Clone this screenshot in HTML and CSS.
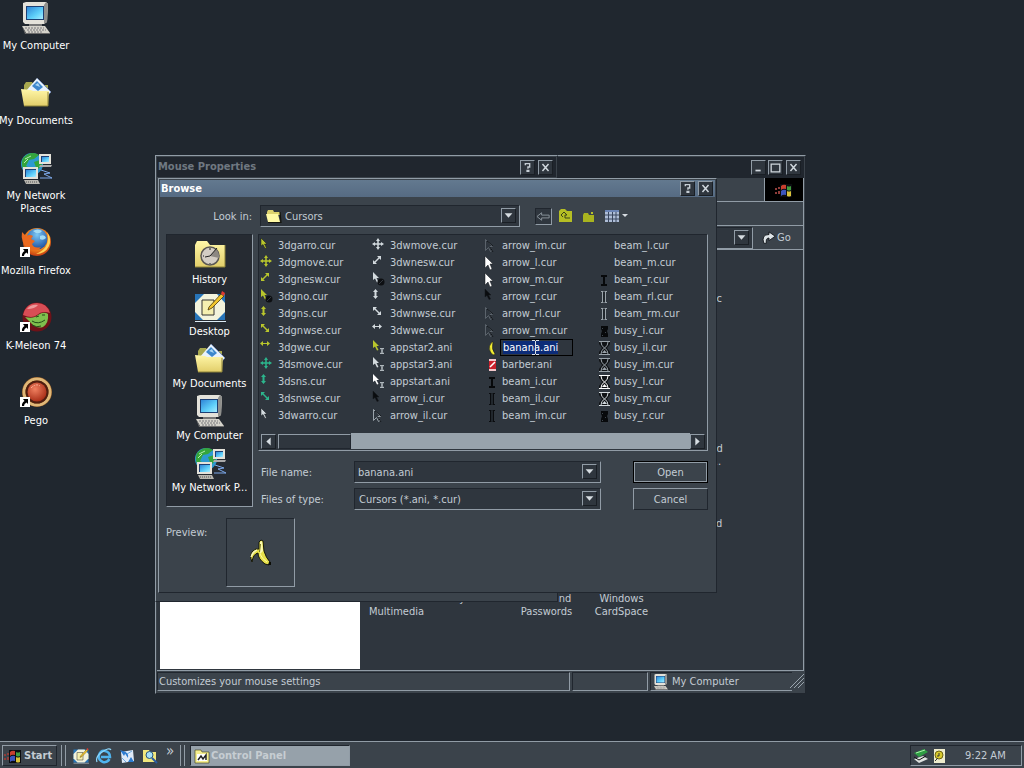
FILE: index.html
```
<!DOCTYPE html>
<html lang="en">
<head>
    <meta charset="UTF-8">
    <meta name="viewport" content="width=device-width, initial-scale=1.0">
    <title>Desktop</title>
    <link rel="stylesheet" href="styles.css">
</head>
<body>
    <!-- icon sprites -->
    <svg class="sprites" aria-hidden="true">
        <defs>
            <linearGradient id="screen" x1="0" y1="0" x2="1" y2="1"><stop offset="0" stop-color="#2f86d8"/><stop offset=".6" stop-color="#5fd0fa"/><stop offset="1" stop-color="#a8ecff"/></linearGradient>
            <linearGradient id="manila" x1="0" y1="0" x2="0" y2="1"><stop offset="0" stop-color="#fff7a8"/><stop offset="1" stop-color="#e2ce6a"/></linearGradient>
            <radialGradient id="fox" cx=".5" cy=".4" r=".6"><stop offset="0" stop-color="#ffd34a"/><stop offset=".6" stop-color="#f38a1d"/><stop offset="1" stop-color="#c33c12"/></radialGradient>
            <radialGradient id="blue" cx=".5" cy=".3" r=".7"><stop offset="0" stop-color="#7cc8f5"/><stop offset="1" stop-color="#1b4d9e"/></radialGradient>
            <radialGradient id="red" cx=".4" cy=".35" r=".7"><stop offset="0" stop-color="#f08060"/><stop offset="1" stop-color="#a52a14"/></radialGradient>
        </defs>
        <symbol id="computer" viewBox="0 0 32 32">
            <path d="M3 1l3-1h20l2 2-1 18-3 2H5l-2-2z" fill="#e4e2da"/>
            <path d="M26 0l2 2-1 18-3 2V3z" fill="#8f8f8c"/>
            <path d="M6 4h18v14H6z" fill="#1c3f74"/><path d="M7 5h16v12H7z" fill="url(#screen)"/>
            <path d="M9 22h13v2H9z" fill="#777"/>
            <path d="M2 24h23l5 7H6z" fill="#d5d3cb"/><path d="M5 26h19M7 28h19M8 30h15" stroke="#77767a" stroke-dasharray="2 1"/>
            <path d="M2 24l4 7h24v1H5z" fill="#6c6c6c"/>
        </symbol>
        <symbol id="documents" viewBox="0 0 32 32">
            <path d="M4 8l2-3h6l2 3h14v8H4z" fill="#a8a84e"/>
            <path d="M6 14L17 1l14 14-4 5H8z" fill="#e8f2fc"/><path d="M17 1l14 14-2 2" fill="none" stroke="#7b90b8"/>
            <path d="M12 9l5-5 6 6-5 4z" fill="#3d87cc"/><path d="M15 8l3-2 2 4z" fill="#a9d6f4"/>
            <path d="M1 12l10 1 2 1h16l-1 15H4z" fill="url(#manila)"/><path d="M28 15v14H4" fill="none" stroke="#8c8238"/>
        </symbol>
        <symbol id="network" viewBox="0 0 32 32">
            <circle cx="12" cy="12" r="11" fill="#2c9ad0"/>
            <path d="M3 6q8-8 16-3l-5 4-5 1-3 6 4 2-1 5q-10-4-6-15zM14 10l6-2 2 5-5 5z" fill="#35a53c"/>
            <path d="M5 7l6-3M4 11l4-4" stroke="#b5efb0"/>
            <path d="M19 2h12v10H19z" fill="#e4e2da"/><path d="M21 4h8v6h-8z" fill="#1c3f74"/><path d="M22 5h7v5h-7z" fill="url(#screen)"/><path d="M20 13h12l-1 2H19z" fill="#aaa"/>
            <path d="M3 15h15v12H3z" fill="#e4e2da"/><path d="M5 17h11v8H5z" fill="#1c3f74"/><path d="M6 18h10v7H6z" fill="url(#screen)"/><path d="M4 28h14l2 4H6z" fill="#b9b7b0"/><path d="M6 30h12" stroke="#555" stroke-dasharray="1 1"/>
            <path d="M21 18l9 3-6 1 8 4H20" fill="none" stroke="#7ca8ea"/>
        </symbol>
        <symbol id="shortcut" viewBox="0 0 10 10">
            <path d="M0 0h10v10H0z" fill="#fff"/><path d="M3 2h5v5L6.500 5.500Q4 6.500 4 9H2q-.5-3 2.500-5z" fill="#000"/>
        </symbol>
        <symbol id="firefox" viewBox="0 0 32 32">
            <circle cx="17" cy="15" r="14" fill="url(#fox)"/><circle cx="17" cy="12" r="10.500" fill="url(#blue)"/>
            <path d="M13 4q5-3 9 0-2 3-6 2zM20 9q5-2 6 2-3 3-6 1z" fill="#a4dcf5"/>
            <path d="M2 5l4 4q4-2 7 0l-2 3 4 2-3 3q2 5 9 3-4 6-12 2Q0 16 2 5z" fill="#ea6a20"/>
            <path d="M27 5q5 7 2 14-4 8-13 8 9-4 11-10 2-6 0-12z" fill="#ffd257"/>
        </symbol>
        <symbol id="kmeleon" viewBox="0 0 32 32">
            <circle cx="17" cy="15" r="14.500" fill="#6e1218"/><path d="M3 13Q6 1 17 1q10 0 13 10-8-3-13 2-5 4-14 0z" fill="#d84d55"/><path d="M7 7q4-5 11-4-3 4-11 4z" fill="#ee9a9c"/>
            <path d="M5 15q9 2 13-2 6-4 10-1 1 9-5 13-6 2-11-3z" fill="#7fbf4d"/><path d="M12 19q6 4 13-1M16 15l3-1M22 13l3 0M12 23q5 3 9 1" fill="none" stroke="#234d18"/>
        </symbol>
        <symbol id="pego" viewBox="0 0 32 32">
            <circle cx="17" cy="15" r="15" fill="#8a5726"/><circle cx="17" cy="15" r="13" fill="none" stroke="#e0b878" stroke-width="3"/><circle cx="17" cy="15" r="11.500" fill="#4f1e10"/><circle cx="17" cy="15" r="9.500" fill="url(#red)"/><path d="M11 11q5-5 9-2" fill="none" stroke="#ffb59a" stroke-dasharray="2 1"/>
        </symbol>
        <symbol id="history" viewBox="0 0 32 32">
            <path d="M1 6l2-4h10l3 4h15v22H1z" fill="url(#manila)"/><path d="M31 6v22H1" fill="none" stroke="#8c8238"/>
            <circle cx="16" cy="17" r="9" fill="#d3cdc4" stroke="#5b5854" stroke-width="1.500"/><path d="M16 17l6-7q4 4 3 9z" fill="#8c8882"/><path d="M16 17l7-8M16 17l-5 1M9 17h1M16 24v1M16 9v2" stroke="#222"/>
        </symbol>
        <symbol id="deskpad" viewBox="0 0 32 32">
            <path d="M1 3h30v26H1z" fill="#2774b8"/><path d="M10 3h13l8 9v9l-8 8H9l-8-8v-9z" fill="#f3f3dc"/><path d="M1 30.500h31" stroke="#dcebf5"/>
            <path d="M8 9h12v15H8z" fill="#f5efb0" stroke="#333"/><path d="M15 16L27 3l3 2-12 12-4 2z" fill="#f1c62c" stroke="#4d3708" stroke-width=".8"/><path d="M27 3l1-3 3 2-1 3z" fill="#e23a30"/>
        </symbol>
        <symbol id="folder" viewBox="0 0 16 16">
            <path d="M1 4l1-2h5l1 2h6v3H1z" fill="#ddd26e"/><path d="M0 6h12l2 8H2z" fill="#fff9a4"/><path d="M14 4l1 10.500H2" fill="none" stroke="#16160e" stroke-width="1.200"/>
        </symbol>
        <symbol id="flag" viewBox="0 0 18 16">
            <path d="M0 6h2v2H0zM0 10h2v2H0zM3 5h2v2H3zM3 9h2v3H3z" fill="#8f3d3a"/>
            <path d="M5 2h12v13H5z" fill="#0b0c10"/>
            <path d="M6 4q2-2 5-1v4q-3-1-5 1z" fill="#c8402f"/><path d="M12 4q2 1 4 0v4q-2 1-4 0z" fill="#3f9c40"/>
            <path d="M6 9q2-2 5-1v5q-3-1-5 1z" fill="#3c55bd"/><path d="M12 9q2 1 4 0v5q-2 1-4 0z" fill="#d9c23a"/>
        </symbol>
        <symbol id="question" viewBox="0 0 15 15"><path d="M5 5V3h5v4H8v2M7 11h2v1H7z" fill="none" stroke="#c5cdd4" stroke-width="1.600"/></symbol>
        <symbol id="cross" viewBox="0 0 15 15"><path d="M4 3.500l7 8M11 3.500l-7 8" stroke="#d0d7dd" stroke-width="1.700"/></symbol>
        <symbol id="mini" viewBox="0 0 15 15"><path d="M4 11h6" stroke="#d0d7dd" stroke-width="2"/></symbol>
        <symbol id="maxi" viewBox="0 0 15 15"><path d="M2.500 3v9.500h10V3M2 3.500h11" fill="none" stroke="#d0d7dd" stroke-width="1.500"/></symbol>
        <symbol id="down" viewBox="0 0 15 15"><path d="M3 5h9L7.500 10z" fill="#d6dce1"/></symbol>

        <!-- cursors, coloured by currentColor -->
        <symbol id="c-arrow" viewBox="0 0 16 16"><path d="M1 0l6 6H4.500l2 4-1.500.5-2-4L1 8z" fill="currentColor" stroke="#14181c" stroke-width=".5"/></symbol>
        <symbol id="c-big" viewBox="0 0 16 16"><path d="M1 1l8 8H6l2 5-2 1-2-5-3 3z" fill="currentColor" stroke="#14181c" stroke-width=".5"/></symbol>
        <symbol id="c-line" viewBox="0 0 16 16"><path d="M1.500 1.500l7 7H6l2 4-1.500 1-2-4-3 3z" fill="none" stroke="currentColor"/><path d="M6 9l3 5M3 3l6 5" stroke="#14181c"/></symbol>
        <symbol id="c-move" viewBox="0 0 16 16"><path d="M6 0l2 3H4zM6 12l2-3H4zM0 6l3-2v4zM12 6L9 4v4z" fill="currentColor"/><path d="M6 2v8M2 6h8" stroke="currentColor" stroke-width="1.500"/></symbol>
        <symbol id="c-nesw" viewBox="0 0 16 16"><path d="M1 9V5l1.500 1.500L6.500 2.500 5 1h4v4L7.500 3.500 3.500 7.500 5 9z" fill="currentColor"/></symbol>
        <symbol id="c-nwse" viewBox="0 0 16 16"><path d="M1 1h4L3.500 2.500l4 4L9 5v4H5l1.500-1.500-4-4L1 5z" fill="currentColor"/></symbol>
        <symbol id="c-ns" viewBox="0 0 16 16"><path d="M3.500 0L6 3H4.500v4H6L3.500 10 1 7h1.500V3H1z" fill="currentColor"/></symbol>
        <symbol id="c-we" viewBox="0 0 16 16"><path d="M0 3.500L3 1v2h4V1l3 2.500L7 6V4H3v2z" fill="currentColor"/></symbol>
        <symbol id="c-no" viewBox="0 0 16 16"><path d="M1 0l6 6H4.500l2 4-1.500.5-2-4L1 8z" fill="currentColor"/><circle cx="9" cy="10" r="3.500" fill="#0d0f12"/><path d="M7 12l4-4" stroke="#33383f"/></symbol>
        <symbol id="c-start" viewBox="0 0 16 16"><path d="M1 0l6 6H4.500l2 4-1.500.5-2-4L1 8z" fill="currentColor"/><path d="M8 8.500h4M8 13.500h4M9 9l2 4M11 9l-2 4" stroke="#aeb6bb"/></symbol>
        <symbol id="c-beam" viewBox="0 0 16 16"><path d="M5 3h6v2H9v7h2v2H5v-2h2V5H5z" fill="#07090b"/></symbol>
        <symbol id="c-beamline" viewBox="0 0 16 16"><path d="M5 2.500h2.500M8.500 2.500H11M6.500 3v10M9.500 3v10M5 13.500h2.500M8.500 13.500H11" stroke="currentColor"/><path d="M8 3v10" stroke="#14181c"/></symbol>
        <symbol id="c-busy" viewBox="0 0 16 16"><path d="M3 1h11v3l-3 4 3 4v3H3v-3l3-4-3-4z" fill="#101316"/><path d="M3 1.500h11M3 14.500h11M5 2q0 4 3.500 6Q5 10 5 14M12 2q0 4-3.500 6Q12 10 12 14" fill="none" stroke="currentColor"/><path d="M6 13l2.500-3 2.500 3z" fill="currentColor"/></symbol>
        <symbol id="c-solid" viewBox="0 0 16 16"><path d="M5 3h7v3l-1 2 1 3v3H5v-3l1-3-1-2z" fill="#07090b"/><path d="M6 5h1v1H6zM9 9h1v1H9zM6 12h1v1H6z" fill="#3f474f"/></symbol>
        <symbol id="c-banana" viewBox="0 0 16 16"><path d="M8 2q-4 4-2 9 1 3 4 4l1-1Q7 9 9 2z" fill="#f3ee33" stroke="#17180c" stroke-width=".5"/></symbol>
        <symbol id="c-barber" viewBox="0 0 16 16"><path d="M5 2h7v12H5z" fill="#c8202c"/><path d="M5 3h7M5 13h7M11 5l-5 5" stroke="#fff" stroke-width="1.500"/></symbol>
    </svg>

    <main class="desktop">
        <ul class="shortcuts">
            <li><svg class="icon32"><use href="#computer"/></svg><span>My Computer</span></li>
            <li><svg class="icon32"><use href="#documents"/></svg><span>My Documents</span></li>
            <li><svg class="icon32"><use href="#network"/></svg><span>My Network Places</span></li>
            <li><svg class="icon32"><use href="#firefox"/><use href="#shortcut" y="20" width="10" height="10"/></svg><span>Mozilla Firefox</span></li>
            <li><svg class="icon32"><use href="#kmeleon"/><use href="#shortcut" y="20" width="10" height="10"/></svg><span>K-Meleon 74</span></li>
            <li><svg class="icon32"><use href="#pego"/><use href="#shortcut" y="20" width="10" height="10"/></svg><span>Pego</span></li>
        </ul>

        <!-- Control Panel -->
        <section class="window control-panel" aria-label="Control Panel">
            <header class="titlebar">
                <button class="tb" aria-label="Minimize"><svg><use href="#mini"/></svg></button>
                <button class="tb" aria-label="Maximize"><svg><use href="#maxi"/></svg></button>
                <button class="tb close" aria-label="Close"><svg><use href="#cross"/></svg></button>
            </header>
            <div class="bar menubar"><div class="brand"><svg><use href="#flag"/></svg></div></div>
            <div class="bar"></div>
            <div class="bar address">
                <div class="combo"><input type="text" aria-label="Address"><button class="drop" aria-label="Show addresses"><svg><use href="#down"/></svg></button></div>
                <button class="go"><svg viewBox="0 0 16 16"><path d="M2 14Q-1 4 8 4V1l7 5-7 5V8Q4 8 5 14z" fill="#dfe5e8" stroke="#101418"/></svg>Go</button>
            </div>
            <div class="folder">
                <div class="folder-info"></div>
                <ul class="applets">
                    <li></li><li></li><li></li><li></li><li>Automatic Updates</li>
                    <li></li><li></li><li></li><li></li><li></li>
                    <li></li><li></li><li></li><li></li><li>Phone and Modem ...</li>
                    <li></li><li></li><li></li><li></li><li>Scheduled Tasks</li>
                    <li>Sounds and Multimedia</li><li>System</li><li>Users and Passwords</li><li>Windows CardSpace</li>
                </ul>
            </div>
            <footer class="statusbar">
                <span class="status-text">Customizes your mouse settings</span>
                <span class="status-empty"></span>
                <span class="status-zone"><svg class="icon16"><use href="#computer"/></svg>My Computer</span>
                <svg class="grip" viewBox="0 0 14 14"><path d="M0 14L14 0M4 14L14 4M8 14l6-6" stroke="#9aa5ae"/></svg>
            </footer>
        </section>

        <!-- Mouse Properties -->
        <section class="window mouse-props" aria-label="Mouse Properties">
            <header class="titlebar">
                <h2>Mouse Properties</h2>
                <button class="tb" aria-label="Help"><svg><use href="#question"/></svg></button>
                <button class="tb close" aria-label="Close"><svg><use href="#cross"/></svg></button>
            </header>
        </section>

        <!-- Browse dialog -->
        <section class="window browse" role="dialog" aria-labelledby="browse-title">
            <header class="titlebar active">
                <h2 id="browse-title">Browse</h2>
                <button class="tb" aria-label="Help"><svg><use href="#question"/></svg></button>
                <button class="tb close" aria-label="Close"><svg><use href="#cross"/></svg></button>
            </header>
            <form class="browse-body" onsubmit="return false">
                <div class="lookin">
                    <label for="lookin">Look in:</label>
                    <div class="combo with-icon">
                        <select id="lookin"><option>Cursors</option></select>
                        <svg class="combo-icon"><use href="#folder"/></svg>
                        <span class="drop"><svg><use href="#down"/></svg></span>
                    </div>
                    <div class="tools">
                        <button class="tool back" aria-label="Back"><svg viewBox="0 0 16 16"><path d="M1 8l5-4v2.500h8v3H6V12z" fill="none" stroke="#8d969e"/></svg></button>
                        <button class="tool" aria-label="Up one level"><svg viewBox="0 0 16 16"><path d="M1 3l2-2h4l2 2h5v11H1z" fill="#b5be24"/><path d="M5 9l-2-2 3-3 3 3H7v3h5" fill="none" stroke="#3c4418"/></svg></button>
                        <button class="tool" aria-label="New folder"><svg viewBox="0 0 16 16"><path d="M3 7l1-2h4l1 2h5v7H3z" fill="#a9b41f"/><path d="M11 4h2v2h-2z" fill="#b9c42a"/></svg></button>
                        <button class="tool views" aria-label="Views"><svg viewBox="0 0 24 16"><path d="M1 2h14v12H1z" fill="#aebdd6"/><path d="M1 2h14v2H1z" fill="#6a84b5"/><path d="M1 7h14M1 11h14M4.500 4v10M8.500 4v10M12 4v10" stroke="#39465e"/><path d="M18 6h6l-3 3z" fill="#d6dce1"/></svg></button>
                    </div>
                </div>

                <div class="browse-main">
                    <nav class="places">
                        <a href="#"><svg class="icon32"><use href="#history"/></svg>History</a>
                        <a href="#"><svg class="icon32"><use href="#deskpad"/></svg>Desktop</a>
                        <a href="#"><svg class="icon32"><use href="#documents"/></svg>My Documents</a>
                        <a href="#"><svg class="icon32"><use href="#computer"/></svg>My Computer</a>
                        <a href="#"><svg class="icon32"><use href="#network"/></svg>My Network P...</a>
                    </nav>

                    <div class="browse-right">
                        <div class="filebox">
                            <ul class="files">
                                <li class="gold"><svg><use href="#c-arrow"/></svg>3dgarro.cur</li>
                                <li class="gold"><svg><use href="#c-move"/></svg>3dgmove.cur</li>
                                <li class="gold"><svg><use href="#c-nesw"/></svg>3dgnesw.cur</li>
                                <li class="gold"><svg><use href="#c-no"/></svg>3dgno.cur</li>
                                <li class="gold"><svg><use href="#c-ns"/></svg>3dgns.cur</li>
                                <li class="gold"><svg><use href="#c-nwse"/></svg>3dgnwse.cur</li>
                                <li class="gold"><svg><use href="#c-we"/></svg>3dgwe.cur</li>
                                <li class="teal"><svg><use href="#c-move"/></svg>3dsmove.cur</li>
                                <li class="teal"><svg><use href="#c-ns"/></svg>3dsns.cur</li>
                                <li class="teal"><svg><use href="#c-nwse"/></svg>3dsnwse.cur</li>
                                <li class="pale"><svg><use href="#c-arrow"/></svg>3dwarro.cur</li>
                                <li class="pale"><svg><use href="#c-move"/></svg>3dwmove.cur</li>
                                <li class="pale"><svg><use href="#c-nesw"/></svg>3dwnesw.cur</li>
                                <li class="pale"><svg><use href="#c-no"/></svg>3dwno.cur</li>
                                <li class="pale"><svg><use href="#c-ns"/></svg>3dwns.cur</li>
                                <li class="pale"><svg><use href="#c-nwse"/></svg>3dwnwse.cur</li>
                                <li class="pale"><svg><use href="#c-we"/></svg>3dwwe.cur</li>
                                <li class="gold"><svg><use href="#c-start"/></svg>appstar2.ani</li>
                                <li class="pale"><svg><use href="#c-start"/></svg>appstar3.ani</li>
                                <li class="white"><svg><use href="#c-start"/></svg>appstart.ani</li>
                                <li class="black"><svg><use href="#c-arrow"/></svg>arrow_i.cur</li>
                                <li class="gray"><svg><use href="#c-line"/></svg>arrow_il.cur</li>
                                <li class="dim"><svg><use href="#c-line"/></svg>arrow_im.cur</li>
                                <li class="white"><svg><use href="#c-big"/></svg>arrow_l.cur</li>
                                <li class="white"><svg><use href="#c-big"/></svg>arrow_m.cur</li>
                                <li class="black"><svg><use href="#c-arrow"/></svg>arrow_r.cur</li>
                                <li class="dim"><svg><use href="#c-line"/></svg>arrow_rl.cur</li>
                                <li class="dim"><svg><use href="#c-line"/></svg>arrow_rm.cur</li>
                                <li class="renaming"><svg><use href="#c-banana"/></svg><input id="rename" type="text" value="banana.ani" aria-label="Rename file"><svg class="pointer" viewBox="0 0 9 17"><path d="M1 1.500h3M5 1.500h3M4.500 2v13M1 15.500h3M5 15.500h3" stroke="#d9dfe6"/></svg></li>
                                <li><svg><use href="#c-barber"/></svg>barber.ani</li>
                                <li><svg><use href="#c-beam"/></svg>beam_i.cur</li>
                                <li class="black"><svg><use href="#c-beamline"/></svg>beam_il.cur</li>
                                <li class="black"><svg><use href="#c-beamline"/></svg>beam_im.cur</li>
                                <li><svg></svg>beam_l.cur</li>
                                <li><svg></svg>beam_m.cur</li>
                                <li><svg><use href="#c-beam"/></svg>beam_r.cur</li>
                                <li class="gray"><svg><use href="#c-beamline"/></svg>beam_rl.cur</li>
                                <li class="gray"><svg><use href="#c-beamline"/></svg>beam_rm.cur</li>
                                <li><svg><use href="#c-solid"/></svg>busy_i.cur</li>
                                <li class="gray"><svg><use href="#c-busy"/></svg>busy_il.cur</li>
                                <li class="gray"><svg><use href="#c-busy"/></svg>busy_im.cur</li>
                                <li class="white"><svg><use href="#c-busy"/></svg>busy_l.cur</li>
                                <li class="pale"><svg><use href="#c-busy"/></svg>busy_m.cur</li>
                                <li><svg><use href="#c-solid"/></svg>busy_r.cur</li>
                            </ul>
                            <div class="scrollbar">
                                <button type="button" class="tb" aria-label="Scroll left"><svg viewBox="0 0 15 15"><path d="M10 3v9L5 7.500z" fill="#d6dce1"/></svg></button>
                                <div class="thumb"></div>
                                <div class="track"></div>
                                <button type="button" class="tb" aria-label="Scroll right"><svg viewBox="0 0 15 15"><path d="M5 3v9l5-4.500z" fill="#d6dce1"/></svg></button>
                            </div>
                        </div>

                        <div class="fields">
                            <label for="filename">File name:</label>
                            <div class="combo"><input id="filename" type="text" value="banana.ani"><button type="button" class="drop" aria-label="Recent files"><svg><use href="#down"/></svg></button></div>
                            <button class="btn default">Open</button>
                            <label for="filetype">Files of type:</label>
                            <div class="combo"><select id="filetype"><option>Cursors (*.ani, *.cur)</option></select><span class="drop"><svg><use href="#down"/></svg></span></div>
                            <button type="button" class="btn">Cancel</button>
                        </div>
                    </div>
                </div>

                <div class="preview">
                    <span>Preview:</span>
                    <div class="preview-box">
                        <svg viewBox="0 0 32 32">
                            <path d="M14 5l2-2 2 1 1 10q2 7 6 11l-1 3-4-1q-7-5-7-11-5 1-6 9-3-7 1-11 3-3 6-2z" fill="#e6e04a" stroke="#15160a"/>
                            <path d="M6 20q1-6 6-7-4 2-6 7z" fill="#f7f6c0" stroke="#f7f6c0"/><path d="M15 5l2-1 1 10-3 3z" fill="#fbf9b0"/><path d="M15.500 7l-1 8" stroke="#77781c"/><path d="M15 17q2 5 7 8" fill="none" stroke="#fffca0"/><path d="M24 25h2v3h-3z" fill="#0c0d06"/>
                        </svg>
                    </div>
                </div>
            </form>
        </section>
    </main>

    <footer class="taskbar">
        <button class="start"><svg><use href="#flag"/></svg>Start</button>
        <div class="quick">
            <button aria-label="Show Desktop"><svg><use href="#deskpad"/></svg></button>
            <button aria-label="Internet Explorer"><svg viewBox="0 0 16 16"><path d="M13.500 11Q11 15 7 14 2 12 3 7 5 2 9 3q5 1 5 6H5" fill="none" stroke="#4fb4ee" stroke-width="2.500"/><path d="M1 14Q-1 9 6 4t9-2" fill="none" stroke="#8fd6fa" stroke-width="1.200"/></svg></button>
            <button aria-label="Outlook Express"><svg viewBox="0 0 16 16"><path d="M2 4l12-2 1 11-12 2z" fill="#dfeaf8"/><path d="M1 2l6 2-2 4zM5 4q5 0 4 6M15 14l-6 0 3-5z" fill="#2d7bd0"/><path d="M3 10l4 4M8 6l5-3" stroke="#6ea8e0"/></svg></button>
            <button aria-label="Search"><svg viewBox="0 0 16 16"><path d="M1 2h6l1 2h6v10H1z" fill="#f2e77c"/><circle cx="7.500" cy="7" r="3.500" fill="#a7e0fa" stroke="#26557c"/><path d="M10 10l5 5" stroke="#2a5aa0" stroke-width="2"/></svg></button>
            <span class="more">»</span>
        </div>
        <div class="tasks">
            <button class="task"><svg viewBox="0 0 16 16"><path d="M1 2h6l1 2h7v11H1z" fill="#f6ee8e" stroke="#3b3912" stroke-width=".6"/><path d="M3 6h10v7H3z" fill="#fff"/><path d="M4 12l3-4 2 3 3-4v5" fill="none" stroke="#222" stroke-width="1.500"/></svg>Control Panel</button>
        </div>
        <div class="tray">
            <svg viewBox="0 0 16 16"><path d="M1 5l10-4 4 3-9 5z" fill="#2e9d43"/><path d="M3 5l9-3" stroke="#a8f0a8"/><path d="M1 11l9-3 5 3-9 4z" fill="#dfe2e0"/><path d="M1 9l5 3 7-4" fill="none" stroke="#111"/></svg>
            <svg viewBox="0 0 16 16"><path d="M3 1h11v14H3z" fill="#eeeccd"/><circle cx="8" cy="7" r="4" fill="#d8c92c" stroke="#6d6410"/><path d="M8 5v3H6M4 13l3-3" stroke="#333" fill="none"/></svg>
            <time>9:22 AM</time>
        </div>
    </footer>

    <script>
        document.getElementById('rename').select();
    </script>
</body>
</html>
```
FILE: styles.css
```
* { box-sizing: border-box; }
:root {
    --face: #3b434b;
    --well: #2f363e;
    --dark: #20262e;
    --light: #919ca6;
    --text: #c3ccd4;
}
html, body { height: 100%; }
body { margin: 0; display: flex; flex-direction: column; background: #20272f; color: var(--text); font: 11px/13px "DejaVu Sans Condensed", "DejaVu Sans", sans-serif; overflow: hidden; }
ul { list-style: none; margin: 0; padding: 0; }
h2 { margin: 0; flex: 1; font-size: 11px; line-height: 16px; font-weight: bold; }
button, input, select { font: inherit; color: inherit; margin: 0; padding: 0; border: 0; background: none; border-radius: 0; outline: none; }
select { appearance: none; }
svg { display: block; flex: none; }
.sprites { position: absolute; width: 0; height: 0; }
.icon32 { width: 32px; height: 32px; }
.icon16 { width: 16px; height: 16px; }

/* desktop */
.desktop { position: relative; flex: 1; min-height: 0; }
.shortcuts { width: 80px; margin-left: -4px; display: grid; grid-auto-rows: 75px; padding-top: 2px; }
.shortcuts li { display: flex; flex-direction: column; align-items: center; gap: 5px; text-align: center; color: #fff; }

/* windows */
.window { position: absolute; display: flex; flex-direction: column; padding: 1px; background: var(--face); border: 1px solid; border-color: var(--light) var(--dark) var(--dark) var(--light); }
.titlebar { display: flex; align-items: center; height: 20px; padding: 0 3px 0 1px; background: var(--dark); color: #6f7881; }
.titlebar.active { height: 17px; background: linear-gradient(#63798f, #566b83); color: #fff; padding: 0 2px 0 1px; }
.tb { width: 15px; height: 15px; background: var(--well); border: 1px solid; border-color: var(--light) #1a1f25 #1a1f25 var(--light); }
.tb svg { width: 13px; height: 13px; }
.tb + .tb { margin-left: 2px; }
.tb + .close { margin-left: 3px; }

/* control panel */
.control-panel { left: 155px; top: 155px; width: 651px; height: 539px; }
.control-panel .titlebar { height: 21px; justify-content: flex-end; }
.bar { height: 24px; border-bottom: 1px solid var(--light); border-right: 1px solid var(--light); display: flex; justify-content: flex-end; align-items: center; }
.brand { width: 39px; height: 23px; background: #000; border-left: 1px solid var(--light); display: flex; align-items: center; justify-content: center; }
.brand svg { width: 18px; height: 16px; }
.address .combo { flex: 1; }
.go { display: flex; align-items: center; gap: 1px; width: 50px; padding-left: 9px; }
.go svg { width: 14px; height: 14px; }
.folder { flex: 1; display: flex; background: var(--well); border-right: 1px solid var(--light); border-bottom: 1px solid var(--light); min-height: 0; padding: 0 0 1px 3px; }
.folder-info { width: 200px; background: #fff; }
.applets { display: grid; grid-template-columns: repeat(5, 75px); grid-auto-rows: 75px; margin-left: -1px; }
.applets li { padding: 42px 6px 0; text-align: center; }
.statusbar { display: flex; gap: 2px; height: 21px; padding: 1px 0; }
.statusbar span { display: flex; align-items: center; border: 1px solid; border-color: var(--dark) var(--light) var(--light) var(--dark); }
.statusbar .status-text { flex: 1; padding-left: 1px; }
.statusbar .status-empty { width: 76px; }
.statusbar .status-zone { width: 142px; gap: 3px; padding-left: 2px; border-right: 0; }
.grip { width: 14px; height: 18px; margin-left: -4px; }

/* mouse properties */
.mouse-props { left: 155px; top: 155px; width: 403px; height: 447px; }

/* browse */
.browse { left: 158px; top: 178px; width: 559px; }
.browse-body { padding: 8px 6px 4px; }
.combo { display: grid; grid-template-columns: 1fr 16px; height: 22px; background: var(--well); border: 1px solid; border-color: var(--dark) var(--light) var(--light) var(--dark); padding: 2px; }
.combo input { min-width: 0; padding-left: 1px; }
.combo select { grid-area: 1 / 1 / 2 / 3; padding-left: 2px; }
.combo-icon { grid-area: 1 / 1; width: 16px; height: 16px; margin-left: 3px; pointer-events: none; }
.combo.with-icon select { padding-left: 22px; }
.drop { grid-area: 1 / 2; width: 15px; height: 15px; background: var(--well); border: 1px solid; border-color: var(--light) #1a1f25 #1a1f25 var(--light); pointer-events: none; }
.drop svg { width: 13px; height: 13px; }
.lookin { display: grid; grid-template-columns: 86px 260px 1fr; gap: 8px; align-items: center; margin-bottom: 7px; }
.lookin label { text-align: right; }
.tools { display: flex; align-items: center; gap: 6px; padding-left: 7px; }
.tool svg { width: 16px; height: 16px; }
.tool.back { border: 1px solid; border-color: var(--dark) var(--light) var(--light) var(--dark); background: var(--well); }
.tool.back svg { width: 15px; height: 15px; }
.tool.views { margin-left: 2px; }
.tool.views svg { width: 24px; }
.browse-main { display: grid; grid-template-columns: 87px 450px; gap: 5px; }
.places { height: 273px; background: #262b32; border: 1px solid; border-color: var(--dark) var(--light) var(--light) var(--dark); padding-top: 4px; display: grid; grid-auto-rows: 52px; }
.places a { display: flex; flex-direction: column; align-items: center; gap: 2px; color: #fff; text-decoration: none; white-space: nowrap; }
.filebox { background: var(--well); border: 1px solid; border-color: var(--dark) var(--light) var(--light) var(--dark); height: 217px; padding: 2px 1px 1px; display: flex; flex-direction: column; justify-content: space-between; }
.files { display: grid; grid-auto-flow: column; grid-template-rows: repeat(11, 17px); grid-template-columns: repeat(4, 112px); }
.files li { display: flex; align-items: center; gap: 2px; white-space: nowrap; position: relative; }
.files svg { width: 16px; height: 16px; }
.gold svg { color: #b9c62c; }
.teal svg { color: #2cb58c; }
.pale svg { color: #d3dade; }
.white svg { color: #fff; }
.gray svg { color: #9aa3aa; }
.dim svg { color: #5b636b; }
.black svg { color: #0a0c0f; }
.renaming input { width: 73px; height: 17px; margin-left: -2px; padding: 0 2px; border: 1px solid #000; background: var(--well); }
.renaming input::selection { background: #0c2c78; color: #fff; }
.files .pointer { position: absolute; left: 47px; top: 0; width: 9px; height: 17px; }
.scrollbar { display: flex; height: 16px; align-items: center; padding: 0 1px; }
.scrollbar .tb + .tb { margin-left: 0; }
.thumb { width: 73px; height: 15px; margin-left: 2px; background: var(--well); border: 1px solid; border-color: var(--light) var(--dark) var(--dark) var(--light); }
.track { flex: 1; height: 16px; background: #98a3ac; }
.fields { display: grid; grid-template-columns: 94px 247px 1fr; gap: 5px 2px; align-items: center; margin-top: 10px; }
.fields label { padding-left: 3px; }
.fields .btn { justify-self: end; }
.btn { width: 75px; height: 22px; border: 1px solid; border-color: var(--light) var(--dark) var(--dark) var(--light); }
.btn.default { border-color: #000; box-shadow: inset 1px 1px var(--light), inset -1px -1px var(--light); }
.preview { display: flex; gap: 19px; margin-top: 8px; }
.preview span { padding-top: 8px; }
.preview-box { width: 69px; height: 69px; display: grid; place-items: center; border: 1px solid; border-color: var(--dark) var(--light) var(--light) var(--dark); }
.preview-box svg { width: 32px; height: 32px; }

/* taskbar */
.taskbar { display: flex; align-items: stretch; height: 27px; padding: 3px 2px 2px; background: var(--face); border-top: 1px solid var(--light); }
.start { width: 55px; display: flex; align-items: center; gap: 2px; padding-left: 1px; font-weight: bold; border: 1px solid; border-color: var(--light) var(--dark) var(--dark) var(--light); }
.start svg { width: 18px; height: 16px; }
.quick, .tasks { display: flex; align-items: center; margin-left: 8px; border-left: 1px solid var(--light); box-shadow: -3px 0 var(--face), -4px 0 var(--light); }
.quick { gap: 7px; padding-left: 7px; width: 111px; }
.quick svg { width: 16px; height: 16px; }
.more { font-size: 15px; align-self: flex-start; margin-left: 1px; }
.tasks { flex: 1; padding-left: 5px; }
.task { width: 160px; height: 21px; display: flex; align-items: center; gap: 1px; padding-left: 3px; background: #96a1aa; color: #c6cdd2; font-weight: bold; border: 1px solid; border-color: var(--dark) var(--light) var(--light) var(--dark); }
.task svg { width: 16px; height: 16px; }
.tray { width: 112px; display: flex; align-items: center; gap: 2px; padding-left: 2px; border: 1px solid; border-color: var(--dark) var(--light) var(--light) var(--dark); }
.tray svg { width: 16px; height: 16px; }
.tray time { margin-left: 16px; }
```
